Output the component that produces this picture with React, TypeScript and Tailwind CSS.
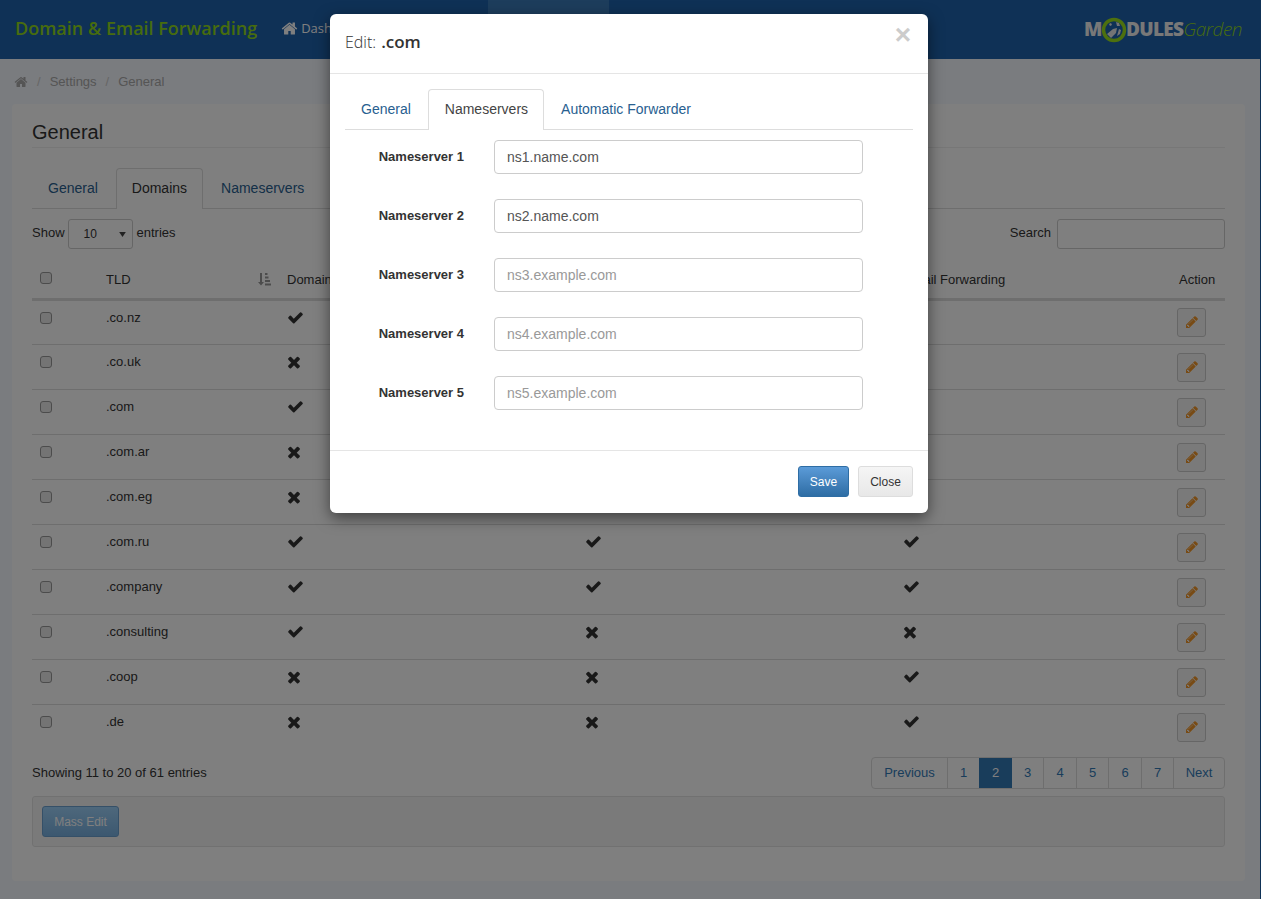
import React from "react";

const OPEN = "font-['Open_Sans',sans-serif]";

function FaCheck({ className }: { className?: string }) {
  return (
    <svg viewBox="0 0 1792 1792" fill="currentColor" className={className}>
      <path d="M1671 566q0 40-28 68l-724 724-136 136q-28 28-68 28t-68-28l-136-136-362-362q-28-28-28-68t28-68l136-136q28-28 68-28t68 28l294 295 656-657q28-28 68-28t68 28l136 136q28 28 28 68z" />
    </svg>
  );
}

function FaTimes({ className }: { className?: string }) {
  return (
    <svg viewBox="0 0 1408 1792" fill="currentColor" className={className}>
      <path d="M1298 1322q0 40-28 68l-136 136q-28 28-68 28t-68-28l-294-294-294 294q-28 28-68 28t-68-28l-136-136q-28-28-28-68t28-68l294-294-294-294q-28-28-28-68t28-68l136-136q28-28 68-28t68 28l294 294 294-294q28-28 68-28t68 28l136 136q28 28 28 68t-28 68l-294 294 294 294q28 28 28 68z" />
    </svg>
  );
}

function FaPencil({ className }: { className?: string }) {
  return (
    <svg viewBox="0 0 1792 1792" fill="currentColor" className={className}>
      <path d="M491 1536l91-91-235-235-91 91v107h128v128h107zm523-928q0-22-22-22-10 0-17 7l-542 542q-7 7-7 17 0 22 22 22 10 0 17-7l542-542q7-7 7-17zm-54-192l416 416-832 832h-416v-416zm683 96q0 53-37 90l-166 166-416-416 166-165q36-38 90-38 53 0 91 38l235 234q37 39 37 91z" />
    </svg>
  );
}

function FaHome({ className }: { className?: string }) {
  return (
    <svg viewBox="0 0 1792 1792" fill="currentColor" className={className}>
      <path d="M1472 992v480q0 26-19 45t-45 19h-384v-384h-256v384h-384q-26 0-45-19t-19-45v-480q0-1 .5-3t.5-3l575-474 575 474q1 2 1 6zm223-69l-62 74q-8 9-21 11h-3q-13 0-21-7l-692-577-692 577q-12 8-24 7-13-2-21-11l-62-74q-8-10-7-23.500t11-21.500l719-599q32-26 76-26t76 26l244 204v-195q0-14 9-23t23-9h192q14 0 23 9t9 23v408l219 182q10 8 11 21.500t-7 23.500z" />
    </svg>
  );
}

function SortIcon() {
  return (
    <svg viewBox="0 0 14 14" fill="currentColor" className="h-[14px] w-[14px] text-[#999]">
      <path d="M3 1h2v9h2l-3 3.500L1 10h2z" />
      <rect x="8" y="1" width="2.500" height="2" />
      <rect x="8" y="4.500" width="3.500" height="2" />
      <rect x="8" y="8" width="5" height="2" />
      <rect x="8" y="11.500" width="6" height="2" />
    </svg>
  );
}

function Logo() {
  return (
    <div className="flex items-center font-['Open_Sans',sans-serif] text-[19px] leading-none">
      <span className="font-extrabold tracking-[-0.5px] text-[#f0f0f0]">M</span>
      <svg viewBox="0 0 26 26" className="mx-[-1px] h-[26px] w-[26px]">
        <circle cx="13" cy="13" r="10.500" fill="#1f62ac" stroke="#9ae01c" strokeWidth="3.500" />
        <path d="M6 17l6-5 4-1-1 5-5 5zM15 5l3 1 1 3-3 0zM9 6l2 1-1 2-2-1zM18 12l2 1-1 4-3 2z" fill="#e8e8e8" />
      </svg>
      <span className="font-extrabold tracking-[-0.7px] text-[#f0f0f0]">DULES</span>
      <span className="text-[19px] font-light italic tracking-[-0.5px] text-[#8fd81a]">Garden</span>
    </div>
  );
}

type Row = { tld: string; a: boolean; b?: boolean; c?: boolean };

const rows: Row[] = [
  { tld: ".co.nz", a: true },
  { tld: ".co.uk", a: false },
  { tld: ".com", a: true },
  { tld: ".com.ar", a: false },
  { tld: ".com.eg", a: false },
  { tld: ".com.ru", a: true, b: true, c: true },
  { tld: ".company", a: true, b: true, c: true },
  { tld: ".consulting", a: true, b: false, c: false },
  { tld: ".coop", a: false, b: false, c: true },
  { tld: ".de", a: false, b: false, c: true },
];

const nameservers = [
  { label: "Nameserver 1", value: "ns1.name.com", placeholder: "" },
  { label: "Nameserver 2", value: "ns2.name.com", placeholder: "" },
  { label: "Nameserver 3", value: "", placeholder: "ns3.example.com" },
  { label: "Nameserver 4", value: "", placeholder: "ns4.example.com" },
  { label: "Nameserver 5", value: "", placeholder: "ns5.example.com" },
];

function Flag({ on }: { on?: boolean }) {
  if (on === undefined) return null;
  return on ? (
    <FaCheck className="h-[17px] w-[17px] text-[#333]" />
  ) : (
    <FaTimes className="h-[18px] w-[14px] text-[#333]" />
  );
}

function Checkbox() {
  return <div className="h-[12px] w-[12px] rounded-[3px] border border-[#999] bg-[#e8e8e8]" />;
}

function PageLink({ label, active, w, sep }: { label: string; active?: boolean; w: string; sep?: boolean }) {
  return (
    <div
      className={`flex h-full items-center justify-center ${sep ? "border-r border-[#ddd]" : ""} ${w} ${
        active ? "bg-[#337ab7] text-white" : "text-[#337ab7]"
      }`}
    >
      {label}
    </div>
  );
}

export default function App() {
  return (
    <div className="relative h-[899px] w-[1261px] overflow-hidden bg-[#f5f8fe] font-['Liberation_Sans',sans-serif] text-[13px] text-[#333]">
      <header className="flex h-[59px] items-center bg-[#1f62ac] pl-[15px] pr-[19px]">
        <div className={`${OPEN} pb-[3px] text-[18px] font-semibold text-[#8fd81a]`}>Domain &amp; Email Forwarding</div>
        <div className={`${OPEN} ml-[24px] flex w-[207px] items-center gap-[3px] pb-[2px] text-[13px] text-white`}>
          <FaHome className="h-[17px] w-[17px]" />
          <span>Dashboard</span>
        </div>
        <div className="h-full w-[121px] bg-[#3a7ab8]" />
        <div className="ml-auto">
          <Logo />
        </div>
      </header>

      <div className="flex h-[45px] items-center gap-[9px] pl-[14px] text-[#aaa]">
        <FaHome className="h-[14px] w-[14px]" />
        <span className="text-[#ccc]">/</span>
        <span>Settings</span>
        <span className="text-[#ccc]">/</span>
        <span>General</span>
      </div>

      <main className="mx-[12px] h-[777px] w-[1233px] rounded-[4px] bg-white px-[20px]">
        <h2 className="flex h-[44px] items-end border-b border-[#eee] pb-[1px] text-[20px] leading-[28px]">General</h2>

        <div className="mt-[20px] flex h-[41px] border-b border-[#ddd] text-[14px]">
          <div className="mr-[2px] flex h-[40px] items-center px-[16px] text-[#286090]">General</div>
          <div className="mb-[-1px] mr-[2px] flex h-[41px] items-center rounded-t-[4px] border border-b-0 border-[#ddd] bg-white px-[15px] pb-[1px]">
            Domains
          </div>
          <div className="flex h-[40px] items-center px-[16px] text-[#286090]">Nameservers</div>
        </div>

        <div className="mt-[10px] flex h-[30px] items-center pb-[2px]">
          <span>Show</span>
          <div className="ml-[3px] mt-[2px] flex h-[30px] w-[65px] items-center justify-between rounded-[3px] border border-[#ccc] bg-white pl-[15px] pr-[6px] text-[12px]">
            <span>10</span>
            <svg viewBox="0 0 8 6" className="h-[5px] w-[7px]" fill="#444">
              <path d="M0 0h8L4 6z" />
            </svg>
          </div>
          <span className="ml-[4px]">entries</span>
          <span className="ml-auto">Search</span>
          <div className="ml-[6px] mt-[2px] h-[30px] w-[168px] rounded-[3px] border border-[#ccc] bg-white" />
        </div>

        <table className="mt-[13px] w-full table-fixed border-collapse">
          <colgroup>
            <col className="w-[66px]" />
            <col className="w-[181px]" />
            <col className="w-[299px]" />
            <col className="w-[318px]" />
            <col className="w-[275px]" />
            <col className="w-[54px]" />
          </colgroup>
          <thead>
            <tr className="h-[37px] border-b-[3px] border-[#ddd] text-left font-normal">
              <th className="pb-[4px] pl-[8px] align-middle font-normal">
                <Checkbox />
              </th>
              <th className="px-[8px] pb-[1px] font-normal">
                <div className="flex items-center justify-between">
                  <span>TLD</span>
                  <SortIcon />
                </div>
              </th>
              <th className="whitespace-nowrap px-[8px] pb-[1px] font-normal">Domain Forwarding</th>
              <th className="whitespace-nowrap px-[8px] pb-[1px] font-normal">Nameservers</th>
              <th className="whitespace-nowrap px-[8px] pb-[1px] font-normal">Email Forwarding</th>
              <th className="px-[8px] pb-[1px] font-normal">Action</th>
            </tr>
          </thead>
          <tbody>
            {rows.map((row, i) => (
              <tr key={row.tld} className="h-[45px] border-b border-[#ddd] align-top last:border-b-0">
                <td className="pl-[8px] pt-[11px]">
                  <Checkbox />
                </td>
                <td className="px-[8px] pt-[7px]">{row.tld}</td>
                <td className="px-[8px] pt-[8px]">
                  <Flag on={row.a} />
                </td>
                <td className="px-[7px] pt-[8px]">
                  <Flag on={row.b} />
                </td>
                <td className="px-[7px] pt-[8px]">
                  <Flag on={row.c} />
                </td>
                <td className={`pl-[6px] ${i === 0 ? "pt-[7px]" : "pt-[8px]"}`}>
                  <div className="flex h-[29px] w-[29px] items-center justify-center rounded-[3px] border border-[#ccc] bg-[#f5f5f5]">
                    <FaPencil className="h-[14px] w-[14px] text-[#f0962a]" />
                  </div>
                </td>
              </tr>
            ))}
          </tbody>
        </table>

        <div className="mt-[8px] flex h-[32px] items-center justify-between">
          <span>Showing 11 to 20 of 61 entries</span>
          <div className="flex h-[32px] items-center rounded-[4px] border border-[#ddd]">
            <PageLink label="Previous" w="w-[76px]" sep />
            <PageLink label="1" w="w-[31px]" />
            <PageLink label="2" active w="w-[33px]" />
            <PageLink label="3" w="w-[32px]" sep />
            <PageLink label="4" w="w-[33px]" sep />
            <PageLink label="5" w="w-[32px]" sep />
            <PageLink label="6" w="w-[33px]" sep />
            <PageLink label="7" w="w-[32px]" sep />
            <PageLink label="Next" w="w-[50px]" />
          </div>
        </div>

        <div className="mt-[7px] flex h-[51px] items-center rounded-[3px] border border-[#e3e3e3] bg-[#f5f5f5] pl-[9px]">
          <div className="flex h-[31px] w-[77px] items-center justify-center rounded-[3px] border border-[#6aa0d0] bg-gradient-to-b from-[#9cd0f8] to-[#78b0e0] text-[12px] text-white">
            Mass Edit
          </div>
        </div>
      </main>

      <div className="absolute inset-0 bg-black/50" />
      <div className="absolute right-0 top-0 h-full w-px bg-[#0f3156]" />

      {/* modal */}
      <div className="absolute left-[330px] top-[14px] w-[598px] rounded-[6px] bg-white text-[14px] shadow-[0_5px_15px_rgba(0,0,0,0.5)]">
        <div className="relative flex h-[60px] items-center border-b border-[#e5e5e5] pb-[4px] pl-[15px]">
          <span className={`${OPEN} text-[16px] font-light text-[#333]`}>Edit:</span>
          <span className={`${OPEN} ml-[5px] text-[17px] font-semibold text-[#333]`}>.com</span>
          <span className="absolute right-[17px] top-[5px] text-[28px] font-bold leading-[32px] text-[#ccc]">×</span>
        </div>

        <div className="mx-[15px] mt-[15px] flex h-[41px] border-b border-[#ddd]">
          <div className="mr-[1px] flex h-[40px] items-center px-[16px] text-[#286090]">General</div>
          <div className="mb-[-1px] mr-[1px] flex h-[41px] items-center rounded-t-[4px] border border-b-0 border-[#ddd] bg-white pb-[1px] pl-[16px] pr-[15px] text-[#444]">
            Nameservers
          </div>
          <div className="flex h-[40px] items-center px-[16px] text-[#286090]">Automatic Forwarder</div>
        </div>

        <div className="mt-[10px] flex flex-col gap-[25px]">
          {nameservers.map((ns) => (
            <div key={ns.label} className="flex h-[34px] items-center">
              <div className="w-[134px] text-right text-[13px] font-bold">{ns.label}</div>
              <div className="ml-[30px]">
                <div
                  className={`flex h-[34px] w-[369px] items-center rounded-[4px] border border-[#ccc] pl-[12px] ${
                    ns.value ? "text-[#555]" : "text-[#999]"
                  }`}
                >
                  {ns.value || ns.placeholder}
                </div>
              </div>
            </div>
          ))}
        </div>

        <div className="mt-[40px] flex h-[63px] items-start justify-end gap-[9px] border-t border-[#e5e5e5] pr-[15px] pt-[15px] text-[12px]">
          <div className="flex h-[31px] w-[51px] items-center justify-center rounded-[3px] border border-[#2e6da4] bg-gradient-to-b from-[#5b9bd8] to-[#2e6da4] text-white">
            Save
          </div>
          <div className="flex h-[31px] w-[55px] items-center justify-center rounded-[3px] border border-[#ddd] bg-gradient-to-b from-[#f5f5f5] to-[#e8e8e8] text-[#333]">
            Close
          </div>
        </div>
      </div>
    </div>
  );
}
